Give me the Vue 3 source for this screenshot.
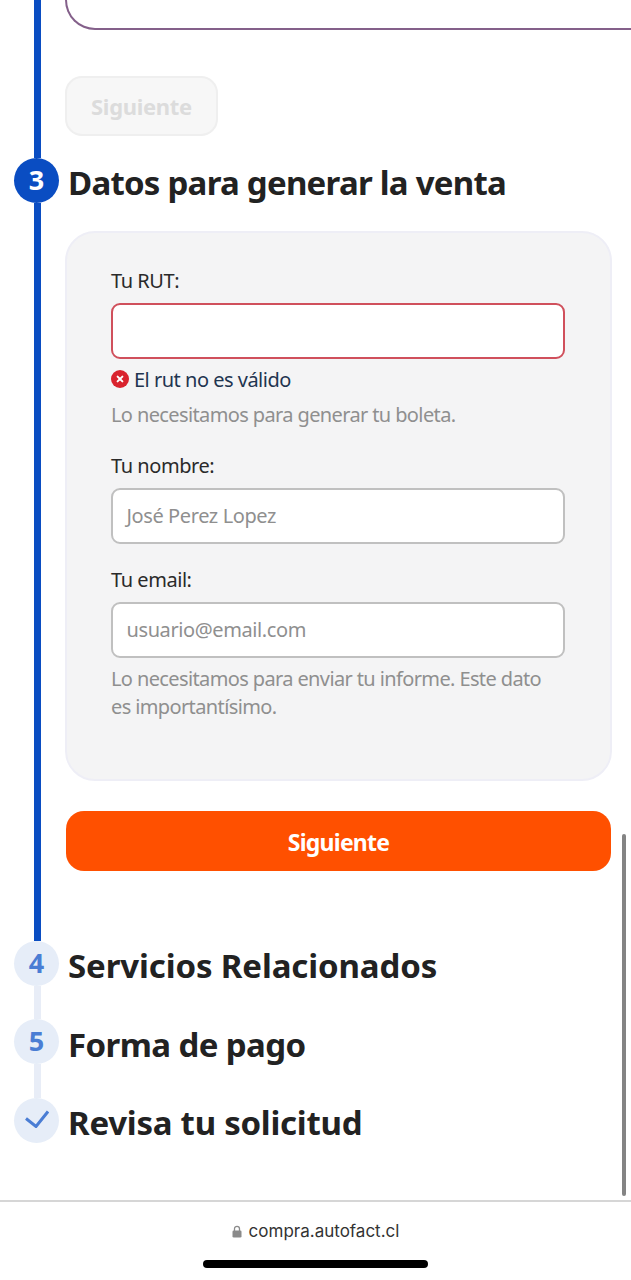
<script setup>
const fields = [
  { label: 'Tu nombre:', placeholder: 'José Perez Lopez' },
  { label: 'Tu email:', placeholder: 'usuario@email.com', help: 'Lo necesitamos para enviar tu informe. Este dato es importantísimo.' }
]
const pending = [
  { id: 'services', mark: '4', title: 'Servicios Relacionados', line: true },
  { id: 'payment', mark: '5', title: 'Forma de pago', line: true },
  { id: 'review', check: true, title: 'Revisa tu solicitud', line: false }
]
</script>

<template>
  <div class="page">
    <main class="viewport">
      <section class="step step-prev">
        <div class="rail"><span class="line"></span></div>
        <div class="body">
          <div class="prev-box"></div>
          <button class="btn-disabled" type="button">Siguiente</button>
        </div>
      </section>

      <section class="step step-active">
        <div class="rail">
          <span class="circle circle-on">3</span>
          <span class="line"></span>
        </div>
        <div class="body">
          <h2 class="title title-active">Datos para generar la venta</h2>
          <div class="card">
            <label class="label">Tu RUT:</label>
            <div class="input input-error"></div>
            <div class="error">
              <svg class="error-icon" viewBox="0 0 18 18" width="18" height="18">
                <circle cx="9" cy="9" r="9" fill="#d9232e" />
                <path d="M6.6 6.6l4.8 4.8M11.4 6.6l-4.8 4.8" stroke="#fff" stroke-width="2" stroke-linecap="round" />
              </svg>
              <span>El rut no es válido</span>
            </div>
            <p class="help help-rut">Lo necesitamos para generar tu boleta.</p>
            <div v-for="f in fields" :key="f.label" class="field">
              <label class="label">{{ f.label }}</label>
              <div class="input input-plain">{{ f.placeholder }}</div>
              <p v-if="f.help" class="help help-email">{{ f.help }}</p>
            </div>
          </div>
          <button class="btn-primary" type="button">Siguiente</button>
        </div>
      </section>

      <section v-for="p in pending" :key="p.id" class="step step-pending" :class="'step-' + p.id">
        <div class="rail">
          <span class="circle circle-off">
            <svg v-if="p.check" viewBox="0 0 24 18" width="24" height="18">
              <path d="M1 8.5l10 8L23 1.5" fill="none" stroke="#4a7dd4" stroke-width="3" />
            </svg>
            <span v-else class="digit">{{ p.mark }}</span>
          </span>
          <span v-if="p.line" class="line line-off"></span>
        </div>
        <div class="body">
          <h2 class="title">{{ p.title }}</h2>
        </div>
      </section>

      <div class="scrollbar"></div>
    </main>

    <footer class="browser">
      <div class="address">
        <svg viewBox="0 0 10 13" width="10" height="13">
          <path d="M2.5 6V3.8a2.5 2.5 0 0 1 5 0V6" fill="none" stroke="#8a8a8a" stroke-width="1.3" />
          <rect x="0.5" y="5.5" width="9" height="7" rx="1.3" fill="#8a8a8a" />
        </svg>
        <span>compra.autofact.cl</span>
      </div>
      <div class="home"></div>
    </footer>
  </div>
</template>

<style>
html, body { margin: 0; background: #fff; }
</style>

<style scoped>
.page {
  width: 631px;
  height: 1280px;
  display: flex;
  flex-direction: column;
  overflow: hidden;
  background: #fff;
  font-family: "Noto Sans", "Open Sans", sans-serif;
  color: #222;
}
.viewport {
  position: relative;
  height: 1200px;
  flex: none;
  overflow: hidden;
}
.step {
  display: flex;
  padding-left: 14px;
  gap: 6px;
}
.rail {
  width: 45px;
  flex: none;
  display: flex;
  flex-direction: column;
  align-items: center;
}
.line {
  width: 7px;
  flex: 1;
  margin-left: 2px;
  background: #0a4dc2;
}
.line-off { background: #e8edf7; }
.body {
  flex: 1;
  min-width: 0;
  padding-right: 19px;
}
.step-prev { height: 158px; }
.prev-box {
  height: 30px;
  margin-right: -60px;
  box-sizing: border-box;
  border: 2px solid #84608a;
  border-top: none;
  border-radius: 0 0 32px 32px;
}
.btn-disabled {
  display: block;
  margin-top: 46px;
  width: 153px;
  height: 60px;
  box-sizing: border-box;
  background: #f7f7f7;
  border: 2px solid #efefef;
  border-radius: 17px;
  color: #dcdcdc;
  font: 700 22px/1 "Noto Sans", sans-serif;
  letter-spacing: -0.3px;
}
.step-active { height: 783px; }
.circle {
  width: 45px;
  height: 45px;
  flex: none;
  border-radius: 50%;
  display: flex;
  align-items: center;
  justify-content: center;
  font-size: 27px;
  font-weight: 700;
  line-height: 1;
  box-sizing: border-box;
  padding-bottom: 2px;
}
.circle-on { background: #0a4dc2; color: #fff; }
.circle-off { background: #e6edf8; color: #4a7dd4; padding-bottom: 3px; }
.title {
  margin: 0;
  padding-left: 3px;
  font-size: 33px;
  font-weight: 700;
  line-height: 46px;
  color: #222;
  white-space: nowrap;
}
.title-active {
  height: 45px;
  padding-top: 2px;
  box-sizing: border-box;
  letter-spacing: -0.75px;
}
.card {
  margin-top: 28px;
  height: 550px;
  box-sizing: border-box;
  padding: 35px 45px 0 44px;
  background: #f4f4f5;
  border: 2px solid #eeeef6;
  border-radius: 30px;
}
.label {
  display: block;
  font-size: 20px;
  line-height: 26px;
  letter-spacing: -0.45px;
  color: #2a2a2a;
}
.input {
  margin-top: 9px;
  height: 56px;
  box-sizing: border-box;
  background: #fff;
  border-radius: 9px;
  display: flex;
  align-items: center;
  padding: 0 13.5px;
}
.input-error { border: 2px solid #d0505c; }
.input-plain {
  border: 2px solid #c0c0c0;
  padding-bottom: 2px;
  font-size: 20px;
  letter-spacing: -0.4px;
  color: #8f8f8f;
}
.error {
  margin-top: 7px;
  height: 26px;
  display: flex;
  align-items: center;
  gap: 5px;
  font-size: 20px;
  letter-spacing: -0.5px;
  color: #1f3550;
}
.error-icon { flex: none; }
.help {
  margin: 0;
  font-size: 20px;
  letter-spacing: -0.62px;
  color: #8f8f8f;
}
.help-rut { margin-top: 10px; line-height: 26px; }
.field { margin-top: 25px; }
.field + .field { margin-top: 23px; }
.help-email { margin-top: 7px; line-height: 28px; max-width: 440px; }
.btn-primary {
  display: block;
  margin: 30px 1px 0;
  padding-top: 3px;
  width: calc(100% - 2px);
  height: 60px;
  border: none;
  border-radius: 18px;
  background: #ff5000;
  color: #fff;
  font: 700 23px/1 "Noto Sans", sans-serif;
  letter-spacing: -0.75px;
}
.step-pending { height: 79px; }
.step-services { height: 78px; }
.step-services .title { letter-spacing: -0.12px; padding-top: 2px; }
.step-payment .title { letter-spacing: -0.6px; padding-top: 3px; }
.step-review .title { letter-spacing: -0.25px; padding-top: 2px; }
.scrollbar {
  position: absolute;
  right: 5px;
  top: 834px;
  width: 4px;
  height: 362px;
  border-radius: 2px;
  background: #848484;
}
.browser {
  flex: 1;
  border-top: 2px solid #d6d6d6;
  box-sizing: border-box;
  display: flex;
  flex-direction: column;
  align-items: center;
  background: #fff;
}
.address {
  margin-top: 19px;
  height: 20px;
  display: flex;
  align-items: center;
  gap: 7px;
  font: 17px/20px "Inter", "Liberation Sans", sans-serif;
  color: #333;
}
.home {
  margin-top: 19px;
  width: 225px;
  height: 8px;
  border-radius: 4px;
  background: #000;
}
</style>
